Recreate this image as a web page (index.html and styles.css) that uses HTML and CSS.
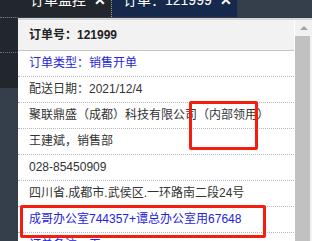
FILE: index.html
```html
<!DOCTYPE html>
<html lang="zh-CN">
<head>
    <meta charset="UTF-8">
    <title>订单监控</title>
    <link rel="stylesheet" href="styles.css">
</head>
<body>
<div class="tabs">
    <div class="tab tab-monitor">订单监控 <span class="close">✕</span></div>
    <div class="tab tab-order">订单：121999 <span class="close">✕</span></div>
</div>

<div class="main">
    <div class="side">
        <div class="side-top"></div>
        <div class="side-mid"></div>
    </div>

    <div class="panel">
        <div class="content">
            <div class="panel-head">订单号：121999</div>
            <div class="row blue">订单类型：销售开单</div>
            <div class="row">配送日期：2021/12/4</div>
            <div class="row">聚联鼎盛（成都）科技有限公司（内部领用）</div>
            <div class="row">王建斌，销售部</div>
            <div class="row">028-85450909</div>
            <div class="row">四川省.成都市.武侯区.一环路南二段24号</div>
            <div class="row blue">成哥办公室744357+谭总办公室用67648</div>
            <div class="row blue">订单备注：无</div>
        </div>
        <div class="scrollbar">
            <div class="arrow"></div>
            <div class="thumb"></div>
        </div>
    </div>
</div>

<!-- annotations -->
<div class="mark mark-dept"></div>
<div class="mark mark-phone"></div>
</body>
</html>
```

FILE: styles.css
```css
body {
    margin: 0;
    width: 312px;
    height: 241px;
    overflow: hidden;
    background-color: #353f4b;
    font-family: "Liberation Sans", "Noto Sans CJK SC", sans-serif;
    position: relative;
}
.tabs {
    display: flex;
    height: 17px;
    overflow: hidden;
    background-color: #353f4b;
}
.tab {
    color: #fff;
    font-size: 14px;
    line-height: 14px;
    padding-top: 0;
    height: 17px;
    box-sizing: border-box;
    white-space: nowrap;
}
.tab span, .tab {
    display: block;
}
.tab-monitor {
    width: 112px;
    padding-left: 30px;
    background-color: #22262d;
    border-right: 1px dotted #9aa0a8;
    box-sizing: border-box;
}
.tab-order {
    width: 125px;
    padding-left: 11px;
    background-color: #14294b;
}
.tab-monitor, .tab-order {
    display: flex;
    margin-top: -7px;
    height: 24px;
}
.close {
    margin-left: 8px;
    font-weight: bold;
}
.main {
    display: flex;
    height: 224px;
}
.side {
    width: 18px;
    flex-shrink: 0;
    border-top: 1px dotted #6b7079;
}
.side-top {
    height: 34px;
    background-color: #22262d;
    border-bottom: 1px dotted #6b7079;
}
.side-mid {
    height: 35px;
    background-color: #22262d;
}
.panel {
    flex: 1;
    display: flex;
    margin-top: 1px;
    background-color: #fff;
    border-top: 2px solid #d6d6d6;
}
.content {
    flex: 1;
    overflow: hidden;
}
.panel-head {
    height: 30px;
    line-height: 30px;
    padding-left: 11px;
    background-color: #f2f2f2;
    border-bottom: 1px solid #c6c6c6;
    font-size: 12px;
    font-weight: bold;
    color: #222;
}
.row {
    height: 25px;
    line-height: 25px;
    padding-left: 11px;
    border-bottom: 1px dotted #b8b8b8;
    font-size: 12px;
    color: #333;
    white-space: nowrap;
}
.blue {
    color: #2424dc;
}
.scrollbar {
    width: 17px;
    flex-shrink: 0;
    background-color: #f1f1f1;
    border-left: 1px solid #fff;
    display: flex;
    flex-direction: column;
}
.arrow {
    height: 16px;
    display: flex;
    align-items: center;
    justify-content: center;
}
.arrow::before {
    content: "";
    border-left: 4px solid transparent;
    border-right: 4px solid transparent;
    border-bottom: 4px solid #a3a3a3;
}
.thumb {
    flex: 1;
    margin-right: 2px;
    background-color: #c1c1c1;
}
.mark {
    position: absolute;
    border: 3px solid #f51c10;
    border-radius: 2px;
    box-sizing: border-box;
}
.mark-dept {
    left: 189px;
    top: 101px;
    width: 69px;
    height: 49px;
}
.mark-phone {
    left: 20px;
    top: 205px;
    width: 246px;
    height: 33px;
}
```
